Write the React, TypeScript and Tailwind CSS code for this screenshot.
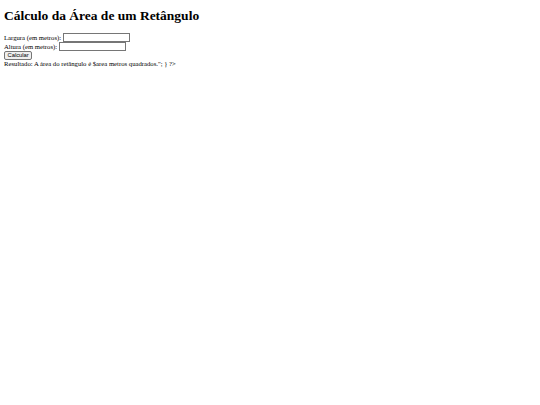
const RESULT_TEXT = 'Resultado: A área do retângulo é $area metros quadrados."; } ?>';

export default function App() {
  return (
    <div className="min-h-[405px] bg-white px-[4px] text-black" style={{ fontFamily: '"Liberation Serif", "Times New Roman", serif' }}>
      <h1 className="pt-[8px] pb-[9px] text-[13.5px] font-bold leading-[16px]">Cálculo da Área de um Retângulo</h1>
      <form className="text-[6.7px] leading-[9px]" onSubmit={(e) => e.preventDefault()}>
        <div className="flex h-[9px] items-center">
          <label>Largura (em metros):</label>
          <input type="text" className="ml-[2px] h-[9px] w-[67px] border border-[#767676] bg-white" />
        </div>
        <div className="flex h-[9px] items-center">
          <label>Altura (em metros):</label>
          <input type="text" className="ml-[2px] h-[9px] w-[67px] border border-[#767676] bg-white" />
        </div>
        <div className="flex h-[9px] items-center">
          <button
            type="submit"
            className="h-[9px] rounded-[2px] border border-[#767676] bg-[#efefef] px-[2.5px] text-[5.8px] leading-[7px]"
            style={{ fontFamily: '"Liberation Sans", Arial, sans-serif' }}
          >
            Calcular
          </button>
        </div>
      </form>
      <p className="text-[6.7px] leading-[8.7px]">{RESULT_TEXT}</p>
    </div>
  );
}
